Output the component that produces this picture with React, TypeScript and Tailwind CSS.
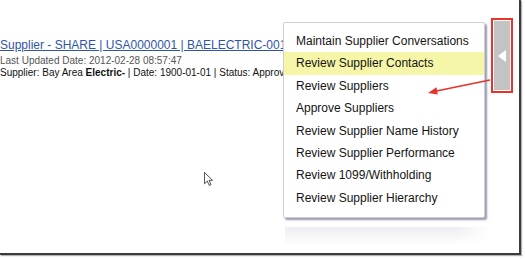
import React from 'react';

const menuItems = [
  'Maintain Supplier Conversations',
  'Review Supplier Contacts',
  'Review Suppliers',
  'Approve Suppliers',
  'Review Supplier Name History',
  'Review Supplier Performance',
  'Review 1099/Withholding',
  'Review Supplier Hierarchy',
];

const Cursor = () => (
  <svg width="9" height="14" viewBox="0 0 12 19" className="absolute left-[204px] top-[172px]">
    <path d="M0.5 0.5 L0.5 16 L4.3 12.3 L7 18.3 L9.4 17.2 L6.8 11.3 L11.5 11.3 Z" fill="white" stroke="#111" strokeWidth="1" strokeLinejoin="round" />
  </svg>
);

const Arrow = () => (
  <svg width="70" height="24" viewBox="0 0 70 24" className="absolute left-[424px] top-[74px]">
    <line x1="66" y1="6" x2="10" y2="17.5" stroke="#e8322c" strokeWidth="1.6" />
    <path d="M4 19 L12.5 13.2 L13.8 20.6 Z" fill="#e8322c" />
  </svg>
);

export default function App() {
  return (
    <div className="w-[525px] h-[259px] bg-white font-['Liberation_Sans',Arial,sans-serif]">
      <div className="relative flex w-[521px] h-[255px] border-r-2 border-b-2 border-[#3c3c3c] shadow-[1px_1px_1px_rgba(0,0,0,0.3)] overflow-hidden">
        {/* record summary */}
        <div className="flex-1 pt-[38px] whitespace-nowrap overflow-hidden">
          <div className="text-[12px] leading-[14px] text-[#2f56a6] underline underline-offset-[1px]">
            Supplier - SHARE | USA0000001 | BAELECTRIC-001
          </div>
          <div className="mt-[2px] text-[10px] leading-[13px] text-[#555]">
            Last Updated Date: 2012-02-28 08:57:47
          </div>
          <div className="text-[10px] leading-[12px] text-[#111]">
            Supplier: Bay Area <span className="font-bold">Electric-</span> | Date: 1900-01-01 | Status: Approved
          </div>
        </div>

        {/* side tab */}
        <div className="mt-[18px] mr-[6px] w-[22px] h-[75px] border-2 border-[#e8322c] bg-white p-px">
          <div className="flex h-full items-center justify-center bg-[#c3c3c3]">
            <div className="ml-[-1px] h-0 w-0 border-y-[6px] border-r-[8px] border-y-transparent border-r-white" />
          </div>
        </div>

        {/* related actions menu */}
        <div className="absolute left-[283px] top-[22px] w-[202px]">
          <div className="h-[196px] rounded-[2px] border border-[#cfcfd6] bg-white pt-[7px] shadow-[2px_2px_2px_rgba(70,70,110,0.55)]">
            {menuItems.map((item, i) => (
              <div
                key={item}
                className={`pl-[12px] text-[12px] leading-[22.4px] text-[#141414] ${i === 1 ? 'bg-[#f6f6a8]' : ''}`}
              >
                {item}
              </div>
            ))}
          </div>
          <div className="mt-[9px] ml-[2px] h-[18px] w-[205px] bg-gradient-to-b from-[#e4e4ea] to-white opacity-60 [mask-image:linear-gradient(to_right,black_85%,transparent)]" />
        </div>

        <Arrow />
        <Cursor />
      </div>
    </div>
  );
}
